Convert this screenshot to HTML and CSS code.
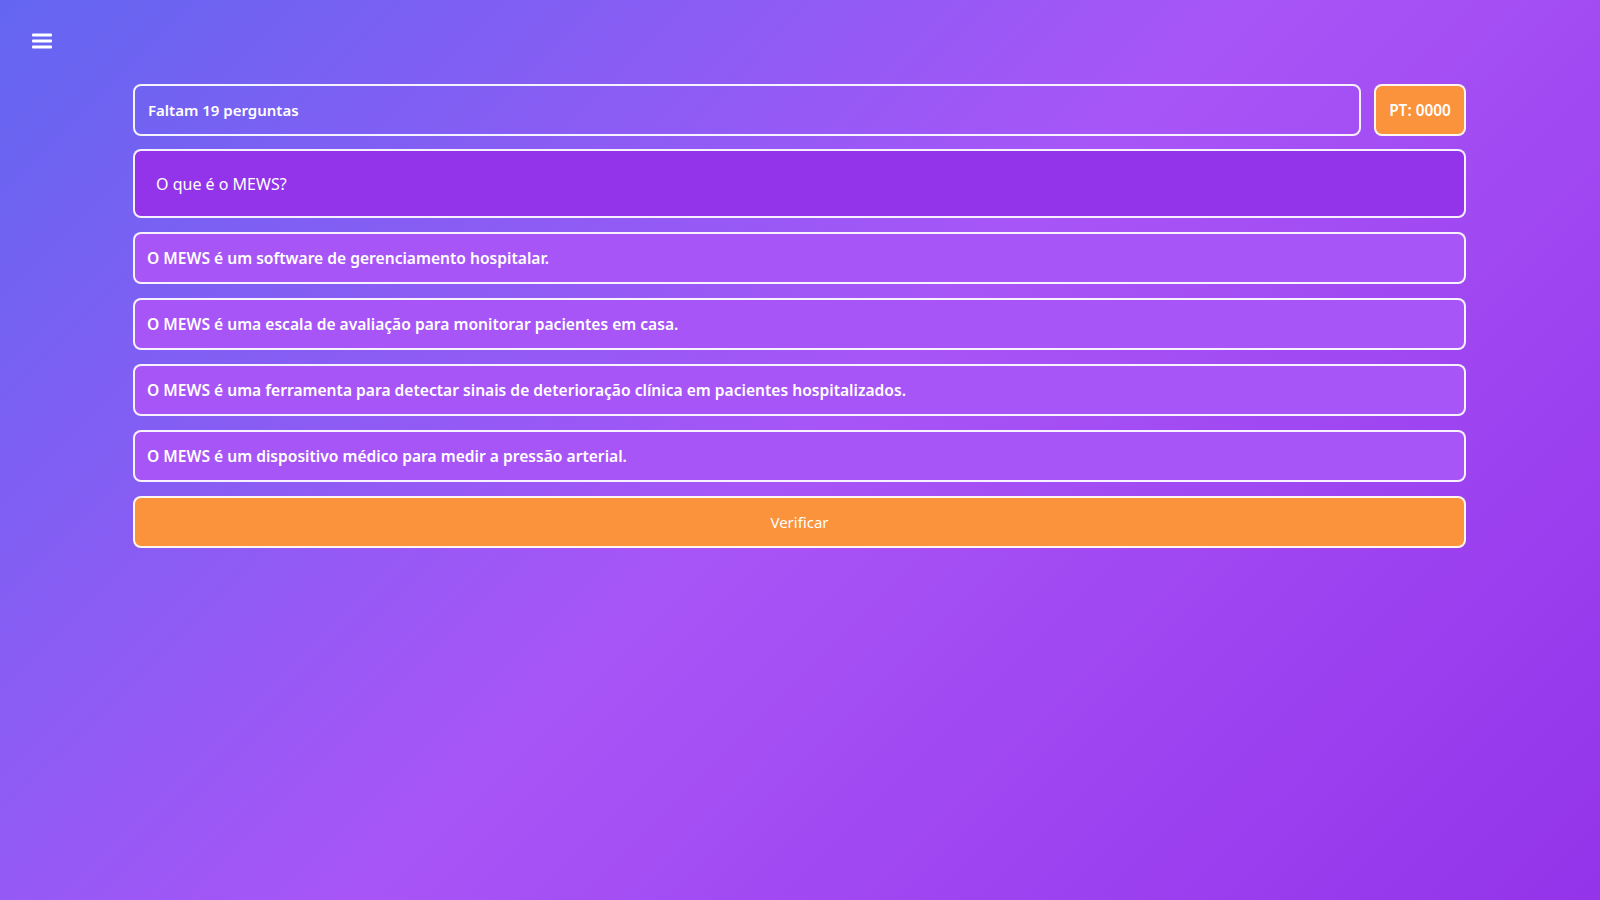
FILE: index.html
```html
<!DOCTYPE html>
<html lang="pt">
<head>
<meta charset="utf-8">
<title>Quiz MEWS</title>
<link rel="stylesheet" href="styles.css">
</head>
<body>
<div class="page">
  <header class="topnav">
    <button class="menu-btn" aria-label="Menu">
      <svg width="20" height="16" viewBox="0 0 20 16"><rect x="0" y="0.5" width="20" height="3" rx="1" fill="#fff"/><rect x="0" y="6.5" width="20" height="3" rx="1" fill="#fff"/><rect x="0" y="12.5" width="20" height="3" rx="1" fill="#fff"/></svg>
    </button>
  </header>
  <main class="quiz">
    <div class="status-row">
      <div class="remaining">Faltam 19 perguntas</div>
      <div class="points">PT: 0000</div>
    </div>
    <div class="question">O que é o MEWS?</div>
    <div class="options">
      <button class="option">O MEWS é um software de gerenciamento hospitalar.</button>
      <button class="option">O MEWS é uma escala de avaliação para monitorar pacientes em casa.</button>
      <button class="option">O MEWS é uma ferramenta para detectar sinais de deterioração clínica em pacientes hospitalizados.</button>
      <button class="option">O MEWS é um dispositivo médico para medir a pressão arterial.</button>
      <button class="verify">Verificar</button>
    </div>
  </main>
</div>
</body>
</html>
```
FILE: styles.css
```css
* { box-sizing: border-box; }
html, body { margin: 0; height: 100%; }
body {
  font-family: "Noto Sans", "Open Sans", "Liberation Sans", sans-serif;
  color: #fff;
  background: linear-gradient(135deg, #6366f1 0%, #a855f7 50%, #9333ea 100%);
  min-height: 100vh;
}
.page { min-height: 100vh; }
.topnav { padding: 33px 32px 0; height: 49px; }
.menu-btn {
  background: none; border: 0; padding: 0; margin: 0;
  width: 20px; height: 16px; display: block; cursor: pointer;
}
.menu-btn svg { display: block; }
.quiz { margin: 35px 134px 0 133px; display: flex; flex-direction: column; gap: 13px; }
.status-row { display: flex; gap: 13px; }
.remaining, .points, .question, .option, .verify {
  border: 2px solid rgba(255,255,255,0.92);
  border-radius: 8px;
  color: #fff;
  font-family: inherit;
}
.remaining {
  flex: 1; height: 52px; display: flex; align-items: center;
  padding: 0 13px; font-weight: 600; font-size: 15px;
}
.points {
  width: 92px; height: 52px; display: flex; align-items: center; justify-content: center;
  background: #fb923c; font-weight: 600; font-size: 15.4px;
}
.question {
  height: 69px; display: flex; align-items: center; padding: 0 21px;
  background: #9333ea; font-size: 16px;
}
.options { display: flex; flex-direction: column; gap: 14px; margin-top: 1px; }
.option {
  height: 52px; text-align: left; padding: 0 12px; background: #a855f7;
  font-size: 15.6px; font-weight: 600; cursor: pointer;
}
.verify {
  height: 52px; background: #fb923c; font-size: 15px; cursor: pointer; text-align: center;
}
```
